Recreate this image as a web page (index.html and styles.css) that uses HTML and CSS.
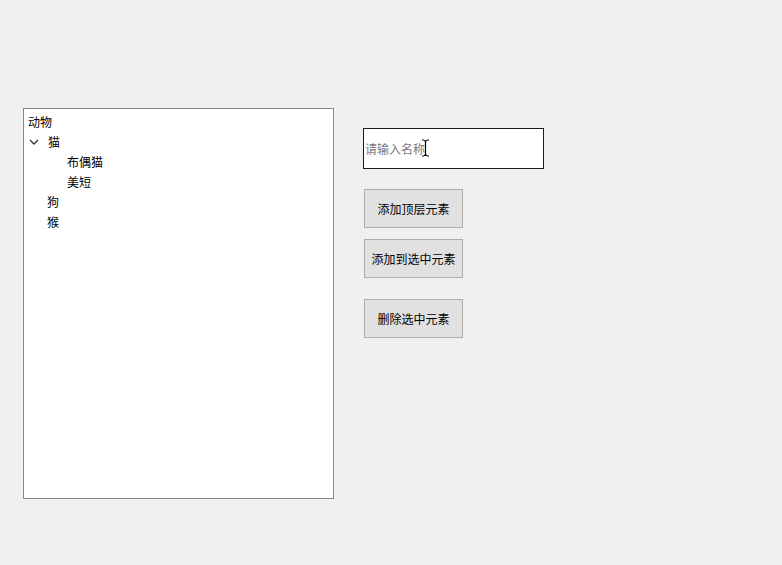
FILE: index.html
```html
<!DOCTYPE html>
<html lang="zh-CN">
<head>
    <meta charset="UTF-8">
    <title>TreeView</title>
    <link rel="stylesheet" href="styles.css">
</head>
<body>
    <div class="window">
        <div class="tree">
            <div class="node">动物</div>
            <div class="node level-1">
                <svg class="chevron" width="10" height="8" viewBox="0 0 10 8"><path d="M1 2 L5 6 L9 2" fill="none" stroke="#333" stroke-width="1.3"/></svg>
                <span>猫</span>
            </div>
            <div class="node level-2">布偶猫</div>
            <div class="node level-2">美短</div>
            <div class="node level-1 leaf">狗</div>
            <div class="node level-1 leaf">猴</div>
        </div>

        <div class="panel">
            <div class="input-wrap">
                <input type="text" class="name-input" placeholder="请输入名称">
                <svg class="ibeam" width="9" height="18" viewBox="0 0 9 18"><path d="M1 1 H3 M6 1 H8 M3 1.5 Q4.5 1.5 4.5 3 V15 Q4.5 16.5 3 16.5 M6 1.5 Q4.5 1.5 4.5 3 M4.5 15 Q4.5 16.5 6 16.5 M1 17 H3 M6 17 H8" fill="none" stroke="#000" stroke-width="1.2"/></svg>
            </div>
            <button class="btn">添加顶层元素</button>
            <button class="btn">添加到选中元素</button>
            <button class="btn btn-gap">删除选中元素</button>
        </div>
    </div>
</body>
</html>
```

FILE: styles.css
```css
* {
    margin: 0;
    padding: 0;
    box-sizing: border-box;
}

body {
    background: #f0f0f0;
    font-family: "Noto Sans CJK SC", "Noto Sans", sans-serif;
    font-size: 12px;
    color: #000;
    width: 782px;
    height: 565px;
    overflow: hidden;
}

.window {
    display: flex;
    align-items: flex-start;
    padding: 108px 0 0 23px;
}

.tree {
    width: 311px;
    height: 391px;
    background: #fff;
    border: 1px solid #828790;
    padding: 3px 0 0 4px;
}

.node {
    display: flex;
    align-items: center;
    height: 20px;
    line-height: 20px;
}

.level-1 {
    padding-left: 1px;
}

.level-1 .chevron {
    margin: 0 9px 0 0;
}

.level-1.leaf {
    padding-left: 19px;
}

.level-2 {
    padding-left: 39px;
}

.panel {
    display: flex;
    flex-direction: column;
    align-items: flex-start;
    margin-left: 29px;
    padding-top: 20px;
}

.input-wrap {
    position: relative;
    margin-bottom: 20px;
}

.name-input {
    width: 181px;
    height: 41px;
    border: 1px solid #1a1a1a;
    background: #fff;
    padding: 0 1px;
    font-family: inherit;
    font-size: 12px;
    outline: none;
}

.name-input::placeholder {
    color: #7a7a7a;
}

.ibeam {
    position: absolute;
    left: 58px;
    top: 11px;
}

.btn {
    width: 99px;
    height: 39px;
    margin-left: 1px;
    margin-bottom: 11px;
    background: #e1e1e1;
    border: 1px solid #adadad;
    font-family: inherit;
    font-size: 12px;
    color: #000;
}

.btn-gap {
    margin-top: 10px;
}
```
